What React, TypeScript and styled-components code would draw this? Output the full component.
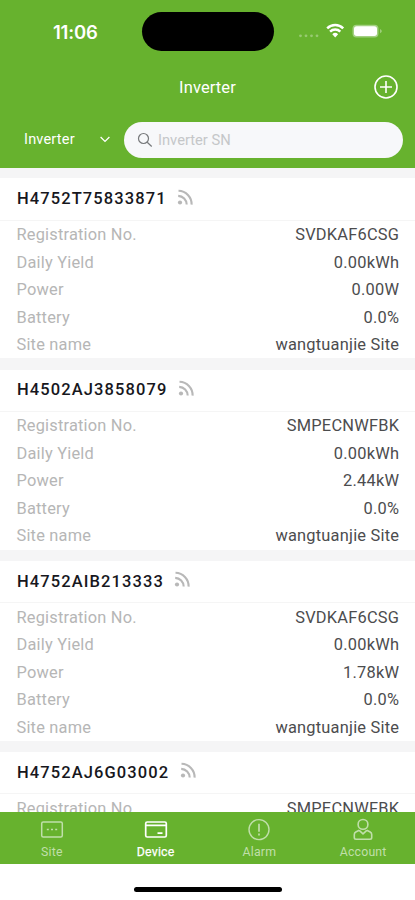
import React from "react";
import styled, { createGlobalStyle } from "styled-components";

const GREEN = "#67b22e";

const Global = createGlobalStyle`
  * { box-sizing: border-box; }
  html, body { margin: 0; padding: 0; }
  body { font-family: Roboto, "Liberation Sans", sans-serif; background: #fff; }
`;

const Screen = styled.div`
  width: 415px;
  height: 900px;
  display: flex;
  flex-direction: column;
  overflow: hidden;
  background: #fff;
`;

const Header = styled.header`
  flex: none;
  height: 168px;
  background: ${GREEN};
  color: #fff;
`;

const StatusBar = styled.div`
  height: 63px;
  display: grid;
  grid-template-columns: 142px 132px 1fr;
  align-items: center;
`;

const Clock = styled.div`
  padding-left: 53px;
  font: 600 18.5px/22px Inter, sans-serif;
  letter-spacing: -0.2px;
`;

const Island = styled.div`
  height: 39px;
  border-radius: 20px;
  background: #000;
`;

const StatusIcons = styled.div`
  display: flex;
  align-items: center;
  padding-left: 24px;
  svg { display: block; margin-top: -1px; }
`;

const TitleBar = styled.div`
  height: 48px;
  display: grid;
  grid-template-columns: 1fr auto 1fr;
  align-items: center;
  padding-right: 17px;
  padding-left: 17px;
`;

const Title = styled.h1`
  grid-column: 2;
  margin: 0;
  font-size: 16.5px;
  font-weight: 400;
  letter-spacing: 0.1px;
`;

const AddButton = styled.button`
  justify-self: end;
  padding: 0;
  border: 0;
  background: none;
  color: #fff;
  svg { display: block; }
`;

const FilterBar = styled.div`
  display: flex;
  align-items: center;
  height: 57px;
  padding: 0 12px 0 24px;
`;

const TypeSelect = styled.div`
  width: 100px;
  display: flex;
  align-items: center;
  justify-content: space-between;
  padding-right: 14px;
  font-size: 14.5px;
  letter-spacing: 0.2px;
`;

const SearchField = styled.div`
  flex: 1;
  height: 36px;
  display: flex;
  align-items: center;
  gap: 5px;
  padding-left: 13px;
  border-radius: 18px;
  background: #f7f8fa;
  color: #c5c7c9;
  font-size: 14.7px;
`;

const List = styled.main`
  flex: none;
  height: 644px;
  padding-top: 10.4px;
  overflow: hidden;
  background: #f5f5f6;
`;

const Card = styled.section`
  height: 180px;
  margin-bottom: 11.2px;
  background: #fff;
`;

const CardHead = styled.div`
  height: 42.5px;
  display: flex;
  align-items: center;
  gap: 10px;
  padding: 0 17px;
  border-bottom: 1px solid #f5f5f5;
  svg { display: block; margin-top: -4px; }
`;

const Serial = styled.h2<{ $width: number }>`
  margin: 0;
  width: ${(p) => p.$width}px;
  white-space: nowrap;
  font-size: 16.5px;
  line-height: 20px;
  font-weight: 500;
  letter-spacing: 1.1px;
  color: #17171d;
`;

const Row = styled.div`
  height: 27.5px;
  display: flex;
  align-items: center;
  justify-content: space-between;
  padding: 0 16px 0 16.5px;
  font-size: 16.4px;
`;

const Label = styled.span`
  color: #b6b6b6;
  letter-spacing: 0.2px;
`;

const Value = styled.span`
  color: #4c4c4e;
  letter-spacing: 0.22px;
  margin-right: -0.2px;
`;

const TabBar = styled.nav`
  flex: none;
  height: 52px;
  display: grid;
  grid-template-columns: repeat(4, 1fr);
  background: ${GREEN};
`;

const Tab = styled.div<{ $active: boolean }>`
  display: flex;
  flex-direction: column;
  align-items: center;
  padding-top: 6px;
  color: ${(p) => (p.$active ? "#fff" : "#c0dfaa")};
  font-size: 12.3px;
  line-height: 16px;
  -webkit-text-stroke: ${(p) => (p.$active ? "0.25px #fff" : "0")};
  letter-spacing: 0.2px;
  svg { display: block; margin-bottom: 2px; }
`;

const HomeArea = styled.footer`
  flex: none;
  height: 36px;
  display: flex;
  justify-content: center;
  padding-top: 23px;
`;

const HomeIndicator = styled.div`
  width: 148px;
  height: 5px;
  border-radius: 3px;
  background: #000;
`;

const SystemStatus = () => (
  <svg width="90" height="24" viewBox="0 0 90 24" fill="none">
    <g fill="#fff" opacity="0.32">
      <circle cx="2.5" cy="16.8" r="1.4" />
      <circle cx="8" cy="16.8" r="1.4" />
      <circle cx="13.5" cy="16.8" r="1.4" />
      <circle cx="19" cy="16.8" r="1.4" />
    </g>
    <g stroke="#fff" strokeWidth="2.5">
      <path d="M29.2 9.3A11.6 11.6 0 0 1 45.2 9.3" />
      <path d="M32.1 12.7A7.3 7.3 0 0 1 42.3 12.7" />
    </g>
    <path d="M34.3 15.2A4.2 4.2 0 0 1 40.1 15.2L37.2 18.5Z" fill="#fff" />
    <rect x="54.5" y="5.7" width="26" height="12.8" rx="4" fill="#fff" opacity="0.4" />
    <rect x="56" y="7.2" width="23" height="9.8" rx="2.7" fill="#fff" />
    <path d="M82.2 9.9q3 2.2 0 4.4Z" fill="#fff" opacity="0.45" />
  </svg>
);

const PlusCircle = () => (
  <svg width="24" height="24" viewBox="0 0 24 24" fill="none" stroke="currentColor" strokeWidth="1.6">
    <circle cx="12" cy="12" r="11" />
    <path d="M12 6v12M6 12h12" />
  </svg>
);

const Chevron = () => (
  <svg width="10" height="7" viewBox="0 0 10 7" fill="none" stroke="#fff" strokeWidth="1.3">
    <path d="M.6 1 5 5.4 9.4 1" />
  </svg>
);

const SearchIcon = () => (
  <svg width="16" height="16" viewBox="0 0 16 16" fill="none" stroke="#77797b" strokeWidth="1.2">
    <circle cx="6.5" cy="6.5" r="5" />
    <path d="m10.2 10.2 4.5 4.3" />
  </svg>
);

const SignalIcon = () => (
  <svg width="16" height="17" viewBox="0 0 16 17" fill="none" stroke="#b8b8b8" strokeWidth="2.1">
    <path d="M1.5 1.8A13.4 13.4 0 0 1 14.6 15.6" />
    <path d="M1.2 6.9A8.8 8.8 0 0 1 9.7 15.6" />
    <circle cx="3" cy="13.5" r="2.1" fill="#b8b8b8" stroke="none" />
  </svg>
);

const SiteIcon = () => (
  <svg width="24" height="24" viewBox="0 0 24 24" fill="none" stroke="currentColor" strokeWidth="1.5">
    <rect x="1.7" y="4" width="20.6" height="15" rx="1.5" />
    <path d="M6.8 11.5h2M11 11.5h2M15.2 11.5h2" strokeWidth="1.7" />
  </svg>
);

const DeviceIcon = () => (
  <svg width="24" height="24" viewBox="0 0 24 24" fill="none" stroke="currentColor" strokeWidth="1.7">
    <rect x="1.7" y="4" width="20.6" height="15" rx="1.5" />
    <path d="M2 7.3h20M13.5 15.2h5" />
  </svg>
);

const AlarmIcon = () => (
  <svg width="24" height="24" viewBox="0 0 24 24" fill="none" stroke="currentColor" strokeWidth="1.4">
    <circle cx="12" cy="11.6" r="10" />
    <path d="M12 5.7v8M12 15.5v2" strokeWidth="1.7" />
  </svg>
);

const AccountIcon = () => (
  <svg width="24" height="24" viewBox="0 0 24 24" fill="none" stroke="currentColor" strokeWidth="1.6" strokeLinejoin="round">
    <circle cx="12" cy="6.4" r="4.9" />
    <path d="M8.2 12.3 4.8 14Q3.3 14.8 3.3 16.6v2.9q0 1.7 1.7 1.7h14q1.7 0 1.7-1.7v-2.9q0-1.8-1.5-2.6l-3.4-1.7M8.2 12.3l3.8 3.5 3.8-3.5" />
  </svg>
);

const devices = [
  { serial: "H4752T75833871", width: 150, registration: "SVDKAF6CSG", power: "0.00W" },
  { serial: "H4502AJ3858079", width: 151, registration: "SMPECNWFBK", power: "2.44kW" },
  { serial: "H4752AIB213333", width: 147, registration: "SVDKAF6CSG", power: "1.78kW" },
  { serial: "H4752AJ6G03002", width: 153, registration: "SMPECNWFBK", power: "0.00W" },
];

const tabs = [
  { name: "Site", Icon: SiteIcon },
  { name: "Device", Icon: DeviceIcon },
  { name: "Alarm", Icon: AlarmIcon },
  { name: "Account", Icon: AccountIcon },
];

export default function App() {
  return (
    <Screen>
      <Global />
      <Header>
        <StatusBar>
          <Clock>11:06</Clock>
          <Island />
          <StatusIcons><SystemStatus /></StatusIcons>
        </StatusBar>
        <TitleBar>
          <Title>Inverter</Title>
          <AddButton aria-label="Add inverter"><PlusCircle /></AddButton>
        </TitleBar>
        <FilterBar>
          <TypeSelect>Inverter<Chevron /></TypeSelect>
          <SearchField><SearchIcon />Inverter SN</SearchField>
        </FilterBar>
      </Header>
      <List>
        {devices.map((d) => (
          <Card key={d.serial}>
            <CardHead>
              <Serial $width={d.width}>{d.serial}</Serial>
              <SignalIcon />
            </CardHead>
            <Row><Label>Registration No.</Label><Value>{d.registration}</Value></Row>
            <Row><Label>Daily Yield</Label><Value>0.00kWh</Value></Row>
            <Row><Label>Power</Label><Value>{d.power}</Value></Row>
            <Row><Label>Battery</Label><Value>0.0%</Value></Row>
            <Row><Label>Site name</Label><Value>wangtuanjie Site</Value></Row>
          </Card>
        ))}
      </List>
      <TabBar>
        {tabs.map(({ name, Icon }) => (
          <Tab key={name} $active={name === "Device"}><Icon />{name}</Tab>
        ))}
      </TabBar>
      <HomeArea><HomeIndicator /></HomeArea>
    </Screen>
  );
}
